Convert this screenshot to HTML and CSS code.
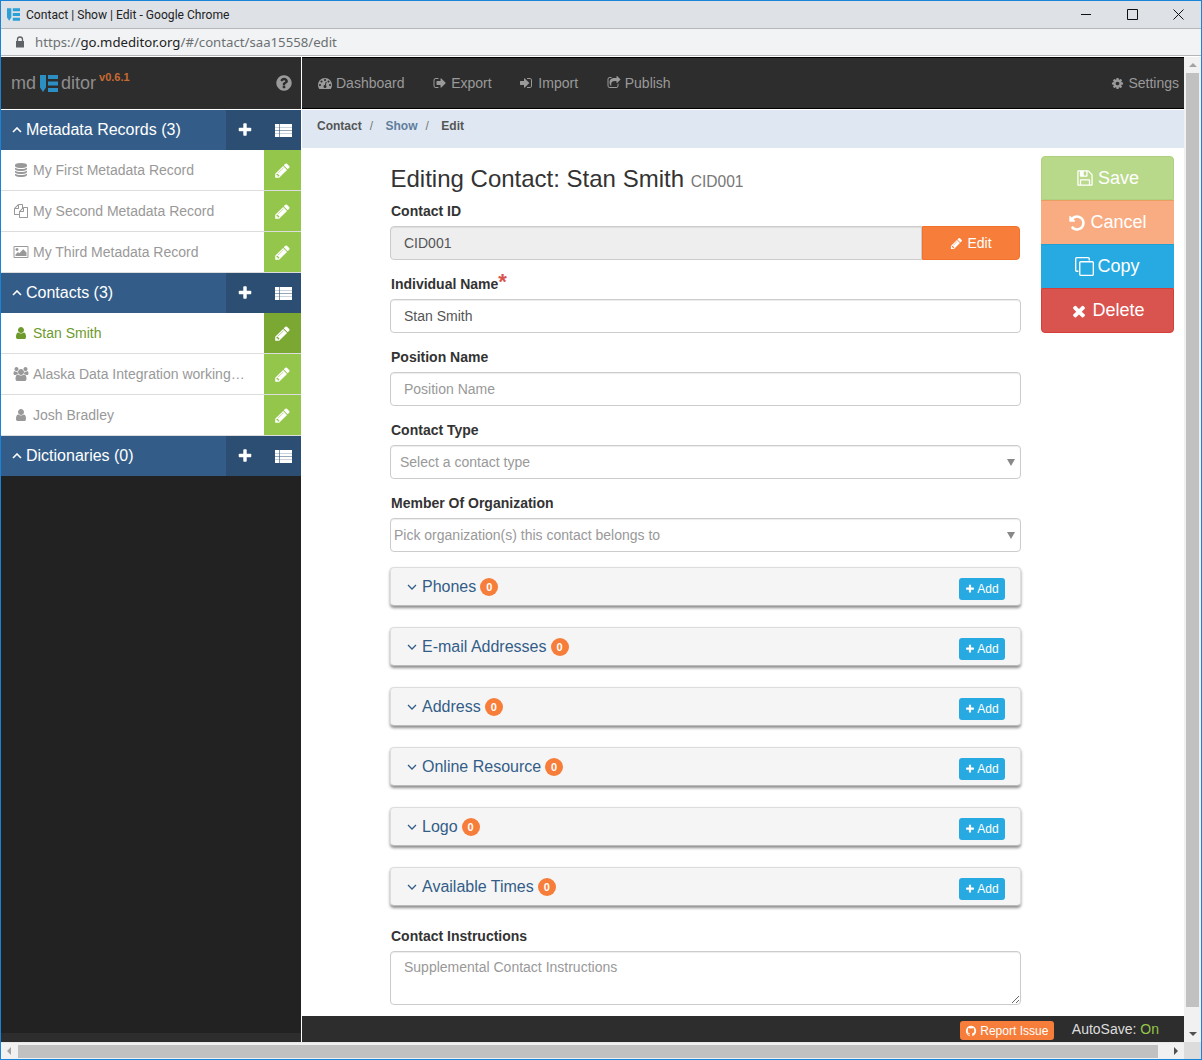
FILE: index.html
```html
<!DOCTYPE html>
<html lang="en">
<head>
    <meta charset="UTF-8">
    <title>Contact | Show | Edit - Google Chrome</title>
    <link rel="stylesheet" href="styles.css">
</head>
<body>
    <!-- icon set -->
    <svg class="sprite" xmlns="http://www.w3.org/2000/svg">
        <symbol id="i-plus" viewBox="0 0 1792 1792"><path d="M1600 736v192q0 40-28 68t-68 28h-416v416q0 40-28 68t-68 28h-192q-40 0-68-28t-28-68v-416h-416q-40 0-68-28t-28-68v-192q0-40 28-68t68-28h416v-416q0-40 28-68t68-28h192q40 0 68 28t28 68v416h416q40 0 68 28t28 68z"/></symbol>
        <symbol id="i-pencil" viewBox="0 0 1792 1792"><path d="M491 1536l91-91-235-235-91 91v107h128v128h107zm523-928q0-22-22-22-10 0-17 7l-542 542q-7 7-7 17 0 22 22 22 10 0 17-7l542-542q7-7 7-17zm-54-192l416 416-832 832h-416v-416zm683 96q0 53-37 90l-166 166-416-416 166-165q36-38 90-38 53 0 91 38l235 234q37 39 37 91z"/></symbol>
        <symbol id="i-user" viewBox="0 0 1792 1792"><path d="M1536 1399q0 109-62.5 187t-150.5 78h-854q-88 0-150.5-78t-62.5-187q0-85 8.5-160.5t31.5-152 58.5-131 94-89 134.5-34.5q131 128 313 128t313-128q76 0 134.5 34.5t94 89 58.5 131 31.5 152 8.5 160.5zm-256-887q0 159-112.5 271.5t-271.5 112.5-271.5-112.5-112.5-271.5 112.5-271.5 271.5-112.5 271.5 112.5 112.5 271.5z"/></symbol>
        <symbol id="i-users" viewBox="0 0 1920 1792"><path d="M593 896q-162 5-265 128h-134q-82 0-138-40.5t-56-118.5q0-353 124-353 6 0 43.5 21t97.5 42.5 119 21.5q67 0 133-23-5 37-5 66 0 139 81 256zm1071 637q0 120-73 189.5t-194 69.5h-874q-121 0-194-69.5t-73-189.5q0-53 3.5-103.5t14-109 26.5-108.5 43-97.5 62-81 85.5-53.5 111.5-20q10 0 43 21.5t73 48 107 48 135 21.5 135-21.5 107-48 73-48 43-21.5q61 0 111.5 20t85.5 53.5 62 81 43 97.5 26.5 108.5 14 109 3.5 103.5zm-1024-1277q0 106-75 181t-181 75-181-75-75-181 75-181 181-75 181 75 75 181zm704 384q0 159-112.5 271.5t-271.5 112.5-271.5-112.5-112.5-271.5 112.5-271.5 271.5-112.5 271.5 112.5 112.5 271.5zm576 225q0 78-56 118.5t-138 40.5h-134q-103-123-265-128 81-117 81-256 0-29-5-66 66 23 133 23 59 0 119-21.5t97.5-42.5 43.5-21q124 0 124 353zm-128-609q0 106-75 181t-181 75-181-75-75-181 75-181 181-75 181 75 75 181z"/></symbol>
        <symbol id="i-times" viewBox="0 0 1792 1792"><path d="M1490 1322q0 40-28 68l-136 136q-28 28-68 28t-68-28l-294-294-294 294q-28 28-68 28t-68-28l-136-136q-28-28-28-68t28-68l294-294-294-294q-28-28-28-68t28-68l136-136q28-28 68-28t68 28l294 294 294-294q28-28 68-28t68 28l136 136q28 28 28 68t-28 68l-294 294 294 294q28 28 28 68z"/></symbol>
        <symbol id="i-help" viewBox="0 0 1792 1792"><path d="M1024 1376v-192q0-14-9-23t-23-9h-192q-14 0-23 9t-9 23v192q0 14 9 23t23 9h192q14 0 23-9t9-23zm256-672q0-88-55.5-163t-138.5-116-170-41q-243 0-371 213-15 24 8 42l132 100q7 6 19 6 16 0 25-12 53-68 86-92 34-24 86-24 48 0 85.5 26t37.5 59q0 38-20 61t-68 45q-63 28-115.5 86.5t-52.5 125.5v36q0 14 9 23t23 9h192q14 0 23-9t9-23q0-19 21.5-49.5t54.5-49.5q32-18 49-28.5t46-35 44.5-48 28-60.5 12.5-81zm384 192q0 209-103 385.5t-279.5 279.5-385.5 103-385.5-103-279.5-279.5-103-385.5 103-385.5 279.5-279.5 385.5-103 385.5 103 279.5 279.5 103 385.5z"/></symbol>
        <symbol id="i-database" viewBox="0 0 1792 1792"><path d="M896 768q237 0 443-43t325-127v170q0 69-103 128t-280 93.5-385 34.5-385-34.5-280-93.5-103-128v-170q119 84 325 127t443 43zm0 768q237 0 443-43t325-127v170q0 69-103 128t-280 93.5-385 34.5-385-34.5-280-93.5-103-128v-170q119 84 325 127t443 43zm0-384q237 0 443-43t325-127v170q0 69-103 128t-280 93.5-385 34.5-385-34.5-280-93.5-103-128v-170q119 84 325 127t443 43zm0-1152q208 0 385 34.5t280 93.5 103 128v128q0 69-103 128t-280 93.5-385 34.5-385-34.5-280-93.5-103-128v-128q0-69 103-128t280-93.5 385-34.5z"/></symbol>
        <symbol id="i-files" viewBox="0 0 1792 1792"><path d="M1696 384q40 0 68 28t28 68v1216q0 40-28 68t-68 28h-960q-40 0-68-28t-28-68v-288h-544q-40 0-68-28t-28-68v-672q0-40 20-88t48-76l408-408q28-28 76-48t88-20h416q40 0 68 28t28 68v328q68-40 128-40h416zm-544 213l-299 299h299v-299zm-640-384l-299 299h299v-299zm196 647l316-316v-416h-384v416q0 40-28 68t-68 28h-416v640h512v-256q0-40 20-88t48-76zm956 804v-1152h-384v416q0 40-28 68t-68 28h-416v640h896z"/></symbol>
        <symbol id="i-picture" viewBox="0 0 1920 1792"><path d="M640 576q0 80-56 136t-136 56-136-56-56-136 56-136 136-56 136 56 56 136zm1024 384v448h-1408v-192l320-320 160 160 512-512zm96-704h-1600q-13 0-22.5 9.5t-9.5 22.5v1216q0 13 9.5 22.5t22.5 9.5h1600q13 0 22.5-9.5t9.5-22.5v-1216q0-13-9.5-22.5t-22.5-9.5zm160 32v1216q0 66-47 113t-113 47h-1600q-66 0-113-47t-47-113v-1216q0-66 47-113t113-47h1600q66 0 113 47t47 113z"/></symbol>
        <symbol id="i-cog" viewBox="0 0 1792 1792"><path d="M1152 896q0-106-75-181t-181-75-181 75-75 181 75 181 181 75 181-75 75-181zm512-109v222q0 12-8 23t-20 13l-185 28q-19 54-39 91 35 50 107 138 10 12 10 25t-9 23q-27 37-99 108t-94 71q-12 0-26-9l-138-108q-44 23-91 38-16 136-29 186-7 28-36 28h-222q-14 0-24.5-8.5t-11.5-21.5l-28-184q-49-16-90-37l-141 107q-10 9-25 9-14 0-25-11-126-114-165-168-7-10-7-23 0-12 8-23 15-21 51-66.5t54-70.5q-27-50-41-99l-183-27q-13-2-21-12.5t-8-23.5v-222q0-12 8-23t19-13l186-28q14-46 39-92-40-57-107-138-10-12-10-24 0-10 9-23 26-36 98.5-107.5t94.5-71.5q13 0 26 10l138 107q44-23 91-38 16-136 29-186 7-28 36-28h222q14 0 24.5 8.5t11.5 21.5l28 184q49 16 90 37l142-107q9-9 24-9 13 0 25 10 129 119 165 170 7 8 7 22 0 12-8 23-15 21-51 66.5t-54 70.5q26 50 41 98l183 28q13 2 21 12.5t8 23.5z"/></symbol>
        <symbol id="i-export" viewBox="0 0 1792 1792"><path d="M704 1440q0 4 1 20t.5 26.5-3 23.5-10 19.5-20.5 6.5h-320q-119 0-203.5-84.5t-84.5-203.5v-704q0-119 84.5-203.5t203.5-84.5h320q13 0 22.5 9.5t9.5 22.5q0 4 1 20t.5 26.5-3 23.5-10 19.5-20.5 6.5h-320q-66 0-113 47t-47 113v704q0 66 47 113t113 47h312l11.5 1 11.5 3 8 5.5 7 9 2 13.5zm928-544q0 26-19 45l-544 544q-19 19-45 19t-45-19-19-45v-288h-448q-26 0-45-19t-19-45v-384q0-26 19-45t45-19h448v-288q0-26 19-45t45-19 45 19l544 544q19 19 19 45z"/></symbol>
        <symbol id="i-import" viewBox="0 0 1792 1792"><path d="M1184 896q0 26-19 45l-544 544q-19 19-45 19t-45-19-19-45v-288h-448q-26 0-45-19t-19-45v-384q0-26 19-45t45-19h448v-288q0-26 19-45t45-19 45 19l544 544q19 19 19 45zm352-352v704q0 119-84.5 203.5t-203.5 84.5h-320q-13 0-22.5-9.5t-9.5-22.5q0-4-1-20t-.5-26.5 3-23.5 10-19.5 20.5-6.5h320q66 0 113-47t47-113v-704q0-66-47-113t-113-47h-312l-11.5-1-11.5-3-8-5.5-7-9-2-13.5q0-4-1-20t-.5-26.5 3-23.5 10-19.5 20.5-6.5h320q119 0 203.5 84.5t84.5 203.5z"/></symbol>
        <symbol id="i-dashboard" viewBox="0 0 1792 1792"><path d="M384 1152q0-53-37.5-90.5t-90.5-37.5-90.5 37.5-37.5 90.5 37.5 90.5 90.5 37.5 90.5-37.5 37.5-90.5zm192-448q0-53-37.5-90.5t-90.5-37.5-90.5 37.5-37.5 90.5 37.5 90.5 90.5 37.5 90.5-37.5 37.5-90.5zm428 481l101-382q6-26-7.5-48.5t-38.5-29.5-48 6.5-30 39.5l-101 382q-60 5-107 43.5t-63 98.5q-20 77 20 146t117 89 146-20 89-117q16-60-6-117t-72-91zm660-33q0-53-37.5-90.5t-90.5-37.5-90.5 37.5-37.5 90.5 37.5 90.5 90.5 37.5 90.5-37.5 37.5-90.5zm-640-640q0-53-37.5-90.5t-90.5-37.5-90.5 37.5-37.5 90.5 37.5 90.5 90.5 37.5 90.5-37.5 37.5-90.5zm448 192q0-53-37.5-90.5t-90.5-37.5-90.5 37.5-37.5 90.5 37.5 90.5 90.5 37.5 90.5-37.5 37.5-90.5zm320 448q0 261-141 483-19 29-54 29h-1402q-35 0-54-29-141-221-141-483 0-182 71-348t191-286 286-191 348-71 348 71 286 191 191 286 71 348z"/></symbol>
        <symbol id="i-share" viewBox="0 0 1792 1792"><path d="M1472 989v259q0 119-84.5 203.5t-203.5 84.5h-832q-119 0-203.5-84.5t-84.5-203.5v-832q0-119 84.5-203.5t203.5-84.5h255q13 0 22.5 9.5t9.5 22.5q0 27-26 32-77 26-133 60-10 4-16 4h-112q-66 0-113 47t-47 113v832q0 66 47 113t113 47h832q66 0 113-47t47-113v-214q0-19 18-29 28-13 54-37 16-16 35-8 21 9 21 29zm237-496l-384 384q-18 19-45 19-12 0-25-5-39-17-39-59v-192h-160q-323 0-438 131-119 137-74 473 3 23-20 34-8 2-12 2-16 0-26-13-10-14-21-31t-39.5-68.5-49.5-99.5-38.5-114-17.5-122q0-49 3.5-91t14-90 28-88 47-81.5 68.5-74 94.5-61.5 124.5-48.5 159.5-30.5 196.5-11h160v-192q0-42 39-59 13-5 25-5 26 0 45 19l384 384q19 19 19 45t-19 45z"/></symbol>
        <symbol id="i-save" viewBox="0 0 1792 1792"><path d="M512 1536h768v-384h-768v384zm896 0h128v-896q0-14-10-38.5t-20-34.5l-281-281q-10-10-34-20t-39-10v416q0 40-28 68t-68 28h-576q-40 0-68-28t-28-68v-416h-128v1280h128v-416q0-40 28-68t68-28h832q40 0 68 28t28 68v416zm-384-928v-320q0-13-9.5-22.5t-22.5-9.5h-192q-13 0-22.5 9.5t-9.5 22.5v320q0 13 9.5 22.5t22.5 9.5h192q13 0 22.5-9.5t9.5-22.5zm640 32v928q0 40-28 68t-68 28h-1344q-40 0-68-28t-28-68v-1344q0-40 28-68t68-28h928q40 0 88 20t76 48l280 280q28 28 48 76t20 88z"/></symbol>
        <symbol id="i-undo" viewBox="0 0 1792 1792"><path d="M1664 896q0 156-61 298t-164 245-245 164-298 61q-172 0-327-72.5t-264-204.5q-7-10-6.5-22.5t8.5-20.5l137-138q10-9 25-9 16 2 23 12 73 95 179 147t225 52q104 0 198.5-40.5t163.5-109.5 109.5-163.5 40.5-198.5-40.5-198.5-109.5-163.5-163.5-109.5-198.5-40.5q-98 0-188 35.5t-160 101.5l137 138q31 30 14 69-17 40-59 40h-448q-26 0-45-19t-19-45v-448q0-42 40-59 39-17 69 14l130 129q107-101 244.5-156.5t284.5-55.5q156 0 298 61t245 164 164 245 61 298z"/></symbol>
        <symbol id="i-clone" viewBox="0 0 1792 1792"><path d="M1664 1632v-1088q0-13-9.5-22.5t-22.5-9.5h-1088q-13 0-22.5 9.5t-9.5 22.5v1088q0 13 9.5 22.5t22.5 9.5h1088q13 0 22.5-9.5t9.5-22.5zm128-1088v1088q0 66-47 113t-113 47h-1088q-66 0-113-47t-47-113v-1088q0-66 47-113t113-47h1088q66 0 113 47t47 113zm-384-384v160h-128v-160q0-13-9.5-22.5t-22.5-9.5h-1088q-13 0-22.5 9.5t-9.5 22.5v1088q0 13 9.5 22.5t22.5 9.5h160v128h-160q-66 0-113-47t-47-113v-1088q0-66 47-113t113-47h1088q66 0 113 47t47 113z"/></symbol>
        <symbol id="i-github" viewBox="0 0 1792 1792"><path d="M896 128q209 0 385.5 103t279.5 279.5 103 385.5q0 251-146.5 451.5t-378.5 277.5q-27 5-40-7t-13-30q0-3 .5-76.5t.5-134.5q0-97-52-142 57-6 102.5-18t94-39 81-66.5 53-105 20.5-150.5q0-119-79-206 37-91-8-204-28-9-81 11t-92 44l-38 24q-93-26-192-26t-192 26q-16-11-42.5-27t-83.5-38.5-85-13.5q-45 113-8 204-79 87-79 206 0 85 20.5 150t52.5 105 80.5 67 94 39 102.5 18q-39 36-49 103-21 10-45 15t-57 5-65.5-21.5-55.5-62.5q-19-32-48.5-52t-49.5-24l-20-3q-21 0-29 4.5t-5 11.5 9 14 13 12l7 5q22 10 43.5 38t31.5 51l10 23q13 38 44 61.5t67 30 69.5 7 55.5-3.5l23-4q0 38 .5 88.5t.5 54.5q0 18-13 30t-40 7q-232-77-378.5-277.5t-146.5-451.5q0-209 103-385.5t279.5-279.5 385.5-103z"/></symbol>
        <symbol id="i-list" viewBox="0 0 17 13"><path d="M0 0h4v3H0zM4.600 0H17v3H4.600zM0 3.350h4v3H0zM4.600 3.350H17v3H4.600zM0 6.700h4v3H0zM4.600 6.700H17v3H4.600zM0 10h4v3H0zM4.600 10H17v3H4.600z"/></symbol>
        <symbol id="i-up" viewBox="0 0 10 6"><path d="M1 5l4-4 4 4" fill="none" stroke="currentColor" stroke-width="1.600"/></symbol>
        <symbol id="i-down" viewBox="0 0 10 6"><path d="M1 1l4 4 4-4" fill="none" stroke="currentColor" stroke-width="1.300"/></symbol>
        <symbol id="i-logo" viewBox="0 0 18 17"><path d="M0 0h6v12.500l-3 4.500-3-4.500zM8 0h10v4H8zM8 6.500h10v4H8zM8 13h10v4H8z"/></symbol>
    </svg>

    <div class="window">
        <div class="titlebar">
            <svg class="title-logo"><use href="#i-logo"/></svg>
            <span class="title-text">Contact | Show | Edit - Google Chrome</span>
            <div class="win-buttons">
                <svg class="win-btn" viewBox="0 0 11 11"><path d="M0 5.500h10"/></svg>
                <svg class="win-btn" viewBox="0 0 11 11"><path d="M.5.500h10v10H.5z"/></svg>
                <svg class="win-btn" viewBox="0 0 11 11"><path d="M.5.500l10 10M10.500.500l-10 10"/></svg>
            </div>
        </div>
        <div class="addressbar">
            <svg class="lock" viewBox="0 0 10 12"><path d="M2.500 5V3.500a2.500 2.500 0 0 1 5 0V5" fill="none" stroke="#5f6368" stroke-width="1.300"/><path d="M1 5h8v6.500H1z" fill="#5f6368"/></svg>
            <span class="url"><span class="url-proto">https://</span><span class="url-host">go.mdeditor.org</span>/#/contact/saa15558/edit</span>
        </div>

        <div class="viewport">
            <div class="app">
                <!-- Left sidebar -->
                <aside class="sidebar">
                    <div class="brand">
                        <span class="brand-name">md</span>
                        <svg class="brand-logo"><use href="#i-logo"/></svg>
                        <span class="brand-name">ditor</span>
                        <span class="brand-version">v0.6.1</span>
                        <svg class="brand-help"><use href="#i-help"/></svg>
                    </div>

                    <div class="side-head">
                        <div class="side-title"><svg class="chev-up"><use href="#i-up"/></svg>Metadata Records (3)</div>
                        <div class="side-actions">
                            <svg class="act-plus"><use href="#i-plus"/></svg>
                            <svg class="act-list"><use href="#i-list"/></svg>
                        </div>
                    </div>
                    <div class="side-item">
                        <div class="side-link"><svg class="side-icon"><use href="#i-database"/></svg><span class="side-text">My First Metadata Record</span></div>
                        <div class="side-edit"><svg><use href="#i-pencil"/></svg></div>
                    </div>
                    <div class="side-item">
                        <div class="side-link"><svg class="side-icon"><use href="#i-files"/></svg><span class="side-text">My Second Metadata Record</span></div>
                        <div class="side-edit"><svg><use href="#i-pencil"/></svg></div>
                    </div>
                    <div class="side-item">
                        <div class="side-link"><svg class="side-icon"><use href="#i-picture"/></svg><span class="side-text">My Third Metadata Record</span></div>
                        <div class="side-edit"><svg><use href="#i-pencil"/></svg></div>
                    </div>

                    <div class="side-head">
                        <div class="side-title"><svg class="chev-up"><use href="#i-up"/></svg>Contacts (3)</div>
                        <div class="side-actions">
                            <svg class="act-plus"><use href="#i-plus"/></svg>
                            <svg class="act-list"><use href="#i-list"/></svg>
                        </div>
                    </div>
                    <div class="side-item active">
                        <div class="side-link"><svg class="side-icon"><use href="#i-user"/></svg><span class="side-text">Stan Smith</span></div>
                        <div class="side-edit"><svg><use href="#i-pencil"/></svg></div>
                    </div>
                    <div class="side-item">
                        <div class="side-link"><svg class="side-icon"><use href="#i-users"/></svg><span class="side-text">Alaska Data Integration working…</span></div>
                        <div class="side-edit"><svg><use href="#i-pencil"/></svg></div>
                    </div>
                    <div class="side-item">
                        <div class="side-link"><svg class="side-icon"><use href="#i-user"/></svg><span class="side-text">Josh Bradley</span></div>
                        <div class="side-edit"><svg><use href="#i-pencil"/></svg></div>
                    </div>

                    <div class="side-head">
                        <div class="side-title"><svg class="chev-up"><use href="#i-up"/></svg>Dictionaries (0)</div>
                        <div class="side-actions">
                            <svg class="act-plus"><use href="#i-plus"/></svg>
                            <svg class="act-list"><use href="#i-list"/></svg>
                        </div>
                    </div>
                    <div class="side-fill"></div>
                    <div class="side-foot"></div>
                </aside>

                <!-- Main column -->
                <main class="main">
                    <nav class="topnav">
                        <a class="nav-link"><svg><use href="#i-dashboard"/></svg>Dashboard</a>
                        <a class="nav-link"><svg><use href="#i-export"/></svg>Export</a>
                        <a class="nav-link"><svg><use href="#i-import"/></svg>Import</a>
                        <a class="nav-link"><svg><use href="#i-share"/></svg>Publish</a>
                        <a class="nav-link nav-right"><svg><use href="#i-cog"/></svg>Settings</a>
                    </nav>
                    <div class="crumbs">
                        <span class="crumb">Contact</span><span class="crumb-sep">/</span>
                        <span class="crumb crumb-link">Show</span><span class="crumb-sep">/</span>
                        <span class="crumb">Edit</span>
                    </div>

                    <div class="content">
                        <form class="contact-form">
                            <h3 class="form-title">Editing Contact: Stan Smith <small>CID001</small></h3>

                            <div class="field">
                                <label class="label">Contact ID</label>
                                <div class="input-group">
                                    <div class="input input-disabled">CID001</div>
                                    <button type="button" class="btn-edit"><svg><use href="#i-pencil"/></svg>Edit</button>
                                </div>
                            </div>
                            <div class="field">
                                <label class="label">Individual Name<span class="required">*</span></label>
                                <div class="input">Stan Smith</div>
                            </div>
                            <div class="field">
                                <label class="label">Position Name</label>
                                <div class="input placeholder">Position Name</div>
                            </div>
                            <div class="field">
                                <label class="label">Contact Type</label>
                                <div class="input select placeholder">Select a contact type</div>
                            </div>
                            <div class="field">
                                <label class="label">Member Of Organization</label>
                                <div class="input select select-multi placeholder">Pick organization(s) this contact belongs to</div>
                            </div>

                            <div class="panels">
                                <div class="panel">
                                    <span class="panel-title"><svg><use href="#i-down"/></svg>Phones</span><span class="count">0</span>
                                    <button type="button" class="btn-add"><svg><use href="#i-plus"/></svg>Add</button>
                                </div>
                                <div class="panel">
                                    <span class="panel-title"><svg><use href="#i-down"/></svg>E-mail Addresses</span><span class="count">0</span>
                                    <button type="button" class="btn-add"><svg><use href="#i-plus"/></svg>Add</button>
                                </div>
                                <div class="panel">
                                    <span class="panel-title"><svg><use href="#i-down"/></svg>Address</span><span class="count">0</span>
                                    <button type="button" class="btn-add"><svg><use href="#i-plus"/></svg>Add</button>
                                </div>
                                <div class="panel">
                                    <span class="panel-title"><svg><use href="#i-down"/></svg>Online Resource</span><span class="count">0</span>
                                    <button type="button" class="btn-add"><svg><use href="#i-plus"/></svg>Add</button>
                                </div>
                                <div class="panel">
                                    <span class="panel-title"><svg><use href="#i-down"/></svg>Logo</span><span class="count">0</span>
                                    <button type="button" class="btn-add"><svg><use href="#i-plus"/></svg>Add</button>
                                </div>
                                <div class="panel">
                                    <span class="panel-title"><svg><use href="#i-down"/></svg>Available Times</span><span class="count">0</span>
                                    <button type="button" class="btn-add"><svg><use href="#i-plus"/></svg>Add</button>
                                </div>
                            </div>

                            <div class="field">
                                <label class="label">Contact Instructions</label>
                                <textarea class="input textarea" placeholder="Supplemental Contact Instructions"></textarea>
                            </div>
                        </form>

                        <div class="actions">
                            <button type="button" class="action action-save"><svg><use href="#i-save"/></svg>Save</button>
                            <button type="button" class="action action-cancel"><svg><use href="#i-undo"/></svg>Cancel</button>
                            <button type="button" class="action action-copy"><svg><use href="#i-clone"/></svg>Copy</button>
                            <button type="button" class="action action-delete"><svg><use href="#i-times"/></svg>Delete</button>
                        </div>
                    </div>

                    <footer class="footer">
                        <button type="button" class="btn-report"><svg><use href="#i-github"/></svg>Report Issue</button>
                        <span class="autosave">AutoSave: <span class="autosave-on">On</span></span>
                    </footer>
                </main>
            </div>

            <div class="vscroll">
                <span class="arrow arrow-up"></span>
                <div class="vthumb"></div>
                <span class="arrow arrow-down"></span>
            </div>
            <div class="hscroll">
                <span class="arrow arrow-left"></span>
                <div class="hthumb"></div>
                <span class="arrow arrow-right"></span>
            </div>
            <div class="corner"></div>
        </div>
    </div>
</body>
</html>
```

FILE: styles.css
```css
* {
    box-sizing: border-box;
}
html, body {
    margin: 0;
    height: 1060px;
    overflow: hidden;
}
body {
    font-family: "Liberation Sans", Arial, sans-serif;
    font-size: 14px;
    line-height: 20px;
    color: #333;
}
.sprite {
    display: none;
}
svg {
    fill: currentColor;
    display: block;
    flex: none;
}
button {
    font-family: inherit;
    border: none;
    padding: 0;
    cursor: pointer;
}

/* browser chrome */
.window {
    width: 1202px;
    height: 1060px;
    display: flex;
    flex-direction: column;
    border: 1px solid #1883d7;
    background: #fff;
}
.titlebar {
    height: 28px;
    flex: none;
    display: flex;
    align-items: center;
    background: #dee1e6;
    padding-left: 6px;
    border-bottom: 1px solid #b4b6b8;
}
.title-logo {
    width: 13px;
    height: 13px;
    color: #2b9fd8;
}
.title-text {
    margin-left: 6px;
    font-family: Roboto, sans-serif;
    font-size: 12.100px;
    color: #222;
}
.win-buttons {
    margin-left: auto;
    display: flex;
    gap: 35px;
    padding-right: 17px;
}
.win-btn {
    width: 11px;
    height: 11px;
    fill: none;
    stroke: #111;
    stroke-width: 1;
}
.addressbar {
    height: 27px;
    flex: none;
    display: flex;
    align-items: center;
    background: #f1f3f4;
    padding-left: 14px;
    border-bottom: 1px solid #b4b6b8;
    margin-bottom: 1px;
}
.lock {
    width: 10px;
    height: 12px;
}
.url {
    margin-left: 10px;
    font-family: "Noto Sans", sans-serif;
    font-size: 13.200px;
    color: #6c7073;
}
.url-proto {
    color: #6c7073;
}
.url-host {
    color: #222;
}
.viewport {
    flex: 1;
    min-height: 0;
    display: grid;
    grid-template-columns: 1183px 1fr;
    grid-template-rows: 985px 1fr;
}

/* sidebar */
.app {
    display: flex;
    min-height: 0;
}
.sidebar {
    width: 301px;
    flex: none;
    display: flex;
    flex-direction: column;
    background: #222;
    border-right: 1px solid #fff;
}
.brand {
    height: 53px;
    flex: none;
    display: flex;
    align-items: center;
    background: #2d2d2d;
    border-bottom: 1px solid #fff;
    padding: 0 8px 0 10px;
}
.brand-name {
    font-size: 18px;
    color: #8e8e8e;
}
.brand-logo {
    width: 18px;
    height: 17px;
    margin: 0 3px 0 4px;
    color: #2b8fc4;
}
.brand-version {
    font-size: 11px;
    font-weight: bold;
    line-height: 12px;
    color: #c86a32;
    margin: -12px 0 0 3px;
}
.brand-help {
    width: 18px;
    height: 18px;
    margin-left: auto;
    color: #9a9a9a;
}
.side-head {
    height: 40px;
    flex: none;
    display: flex;
    background: #335d88;
    color: #fff;
}
.side-title {
    flex: 1;
    display: flex;
    align-items: center;
    font-size: 16px;
    padding-left: 11px;
}
.chev-up {
    width: 10px;
    height: 6px;
    margin-right: 4px;
}
.side-actions {
    width: 75px;
    display: flex;
    align-items: center;
    background: #2b4e72;
    padding-left: 11px;
}
.act-plus {
    width: 16px;
    height: 16px;
}
.act-list {
    width: 17px;
    height: 13px;
    margin-left: 22px;
}
.side-item {
    height: 41px;
    flex: none;
    display: flex;
    background: #fff;
    border-bottom: 1px solid #ddd;
}
.side-link {
    flex: 1;
    min-width: 0;
    display: flex;
    align-items: center;
    padding: 0 8px 0 12px;
    color: #999;
}
.side-icon {
    width: 16px;
    height: 14px;
    margin-right: 4px;
}
.side-text {
    white-space: nowrap;
}
.side-edit {
    width: 37px;
    flex: none;
    display: flex;
    align-items: center;
    justify-content: center;
    background: #93c64a;
    color: #fff;
}
.side-edit svg {
    width: 17px;
    height: 17px;
}
.side-item.active .side-link {
    color: #6e9a2c;
}
.side-item.active .side-edit {
    background: #7ba733;
}
.side-fill {
    flex: 1;
}
.side-foot {
    height: 9px;
    flex: none;
    background: #2d2d2d;
}

/* main */
.main {
    flex: 1;
    min-width: 0;
    display: flex;
    flex-direction: column;
}
.topnav {
    height: 52px;
    flex: none;
    display: flex;
    align-items: center;
    background: #2d2d2d;
    border-top: 1px solid #000;
    border-bottom: 1px solid #000;
    padding: 0 5px 0 16px;
    gap: 28.700px;
}
.nav-link {
    display: flex;
    align-items: center;
    gap: 4px;
    color: #9a9a9a;
}
.nav-link svg {
    width: 14px;
    height: 14px;
}
.nav-right svg {
    width: 13px;
    height: 13px;
}
.nav-right {
    margin-left: auto;
}
.crumbs {
    height: 38px;
    flex: none;
    margin-top: 1px;
    display: flex;
    align-items: center;
    background: #dfe8f2;
    padding: 0 0 6px 15px;
    font-size: 12px;
    font-weight: bold;
    color: #555;
}
.crumb-link {
    color: #5f7d9c;
}
.crumb-sep {
    font-weight: normal;
    color: #777;
    margin: 0 12.500px 0 8px;
}
.content {
    flex: 1;
    min-height: 0;
    display: flex;
    align-items: flex-start;
    padding: 8px 10px 0 88px;
    gap: 20px;
}
.contact-form {
    width: 631px;
    flex: none;
}
.form-title {
    margin: 8px 0 4px 0.500px;
    font-size: 24px;
    line-height: 30px;
    font-weight: normal;
}
.form-title small {
    font-size: 15.600px;
    color: #777;
}
.field {
    margin-bottom: 14px;
}
.label {
    display: block;
    font-weight: bold;
    margin: 0 0 5px 1px;
}
.required {
    color: #d9534f;
    font-size: 22px;
    font-weight: bold;
    line-height: 16px;
    vertical-align: top;
}
.input {
    display: block;
    width: 100%;
    height: 34px;
    padding: 6px 13px;
    border: 1px solid #ccc;
    border-radius: 4px;
    background: #fff;
    color: #555;
    box-shadow: inset 0 1px 1px rgba(0, 0, 0, 0.075);
}
.placeholder {
    color: #999;
}
.input-group {
    display: flex;
    margin-right: 1px;
}
.input-disabled {
    background: #eee;
    border-radius: 4px 0 0 4px;
}
.btn-edit {
    width: 98px;
    flex: none;
    display: flex;
    align-items: center;
    justify-content: center;
    gap: 4px;
    background: #f67e3a;
    border: 1px solid #f2722b;
    border-radius: 0 4px 4px 0;
    color: #fff;
    font-size: 14px;
}
.btn-edit svg {
    width: 13px;
    height: 13px;
}
.select {
    padding-left: 9px;
    position: relative;
}
.select-multi {
    padding-left: 3px;
}
/* dropdown caret */
.select::after {
    content: "";
    position: absolute;
    right: 5px;
    top: 13px;
    border: 4px solid transparent;
    border-top: 7px solid #888;
    border-bottom: 0;
}
.panels {
    padding-top: 1px;
    margin-bottom: 20px;
}
.panel {
    height: 39px;
    display: flex;
    align-items: center;
    margin-bottom: 21px;
    padding: 0 15px 0 16px;
    background: #f5f5f5;
    border: 1px solid #ddd;
    border-bottom-color: #bbb;
    border-radius: 4px;
    box-shadow: 0 2px 3px rgba(0, 0, 0, 0.45);
}
.panel:last-child {
    margin-bottom: 0;
}
.panel-title {
    display: flex;
    align-items: center;
    font-size: 16px;
    color: #335d88;
}
.panel-title svg {
    width: 10px;
    height: 6px;
    margin-right: 5px;
}
.count {
    width: 18px;
    height: 18px;
    margin-left: 4px;
    border-radius: 50%;
    background: #f67e3a;
    color: #fff;
    font-size: 11px;
    font-weight: bold;
    line-height: 18px;
    text-align: center;
}
.btn-add {
    margin: 5px 0 0 auto;
    width: 46px;
    height: 22px;
    display: flex;
    align-items: center;
    justify-content: center;
    gap: 2px;
    background: #27aae1;
    border-radius: 3px;
    color: #fff;
    font-size: 12px;
}
.btn-add svg {
    width: 10px;
    height: 10px;
}
.textarea {
    height: 54px;
    padding-top: 5px;
    font-family: inherit;
    font-size: 14px;
    line-height: 20px;
    resize: vertical;
    margin: 0;
}
.textarea::placeholder {
    color: #999;
}
.actions {
    width: 133px;
    flex: none;
    display: flex;
    flex-direction: column;
}
.action {
    height: 44px;
    display: flex;
    align-items: center;
    justify-content: center;
    gap: 4px;
    color: #fff;
    font-size: 18px;
}
.action svg {
    width: 18px;
    height: 18px;
}
.action-save {
    background: #b8d98a;
    border: 1px solid #aed080;
    border-radius: 4px 4px 0 0;
}
.action-cancel {
    background: #f9ac82;
    border-top: 1px solid #e8a060;
}
.action-copy {
    background: #27aae1;
    border-top: 1px solid #1f9fd3;
    gap: 3px;
}
.action-copy svg {
    width: 19px;
    height: 19px;
}
.action-delete {
    background: #d9534f;
    border: 1px solid #d43f3a;
    border-radius: 0 0 4px 4px;
    height: 45px;
}
.footer {
    height: 26px;
    flex: none;
    display: flex;
    align-items: center;
    background: #2d2d2d;
    padding-right: 25px;
}
.btn-report {
    margin: 3px 0 0 auto;
    width: 94px;
    height: 19px;
    display: flex;
    align-items: center;
    justify-content: center;
    gap: 3px;
    background: #f67e3a;
    border-radius: 3px;
    color: #fff;
    font-size: 12px;
}
.btn-report svg {
    width: 12px;
    height: 12px;
}
.autosave {
    margin-left: 18px;
    color: #ddd;
}
.autosave-on {
    color: #93c64a;
}

/* page scrollbars */
.vscroll {
    display: flex;
    flex-direction: column;
    align-items: center;
    background: #f1f1f1;
    padding: 6px 2px 0;
}
.vthumb {
    width: 100%;
    height: 934px;
    margin-top: 6px;
    background: #c1c1c1;
}
.hscroll {
    display: flex;
    align-items: center;
    background: #f1f1f1;
    padding: 0 6px;
    border-top: 1px solid #e6e6e6;
}
.hthumb {
    height: 13px;
    width: 1141px;
    margin-left: 7px;
    background: #c1c1c1;
}
.corner {
    background: #dcdcdc;
}
.arrow {
    width: 0;
    height: 0;
    border: 4px solid transparent;
    flex: none;
}
.arrow-up {
    border-top: 0;
    border-bottom: 4px solid #a3a3a3;
}
.arrow-down {
    border-bottom: 0;
    border-top: 4px solid #505050;
    margin-top: 25px;
}
.arrow-left {
    border-left: 0;
    border-right: 4px solid #a3a3a3;
}
.arrow-right {
    border-right: 0;
    border-left: 4px solid #505050;
    margin-left: 16px;
}
```
